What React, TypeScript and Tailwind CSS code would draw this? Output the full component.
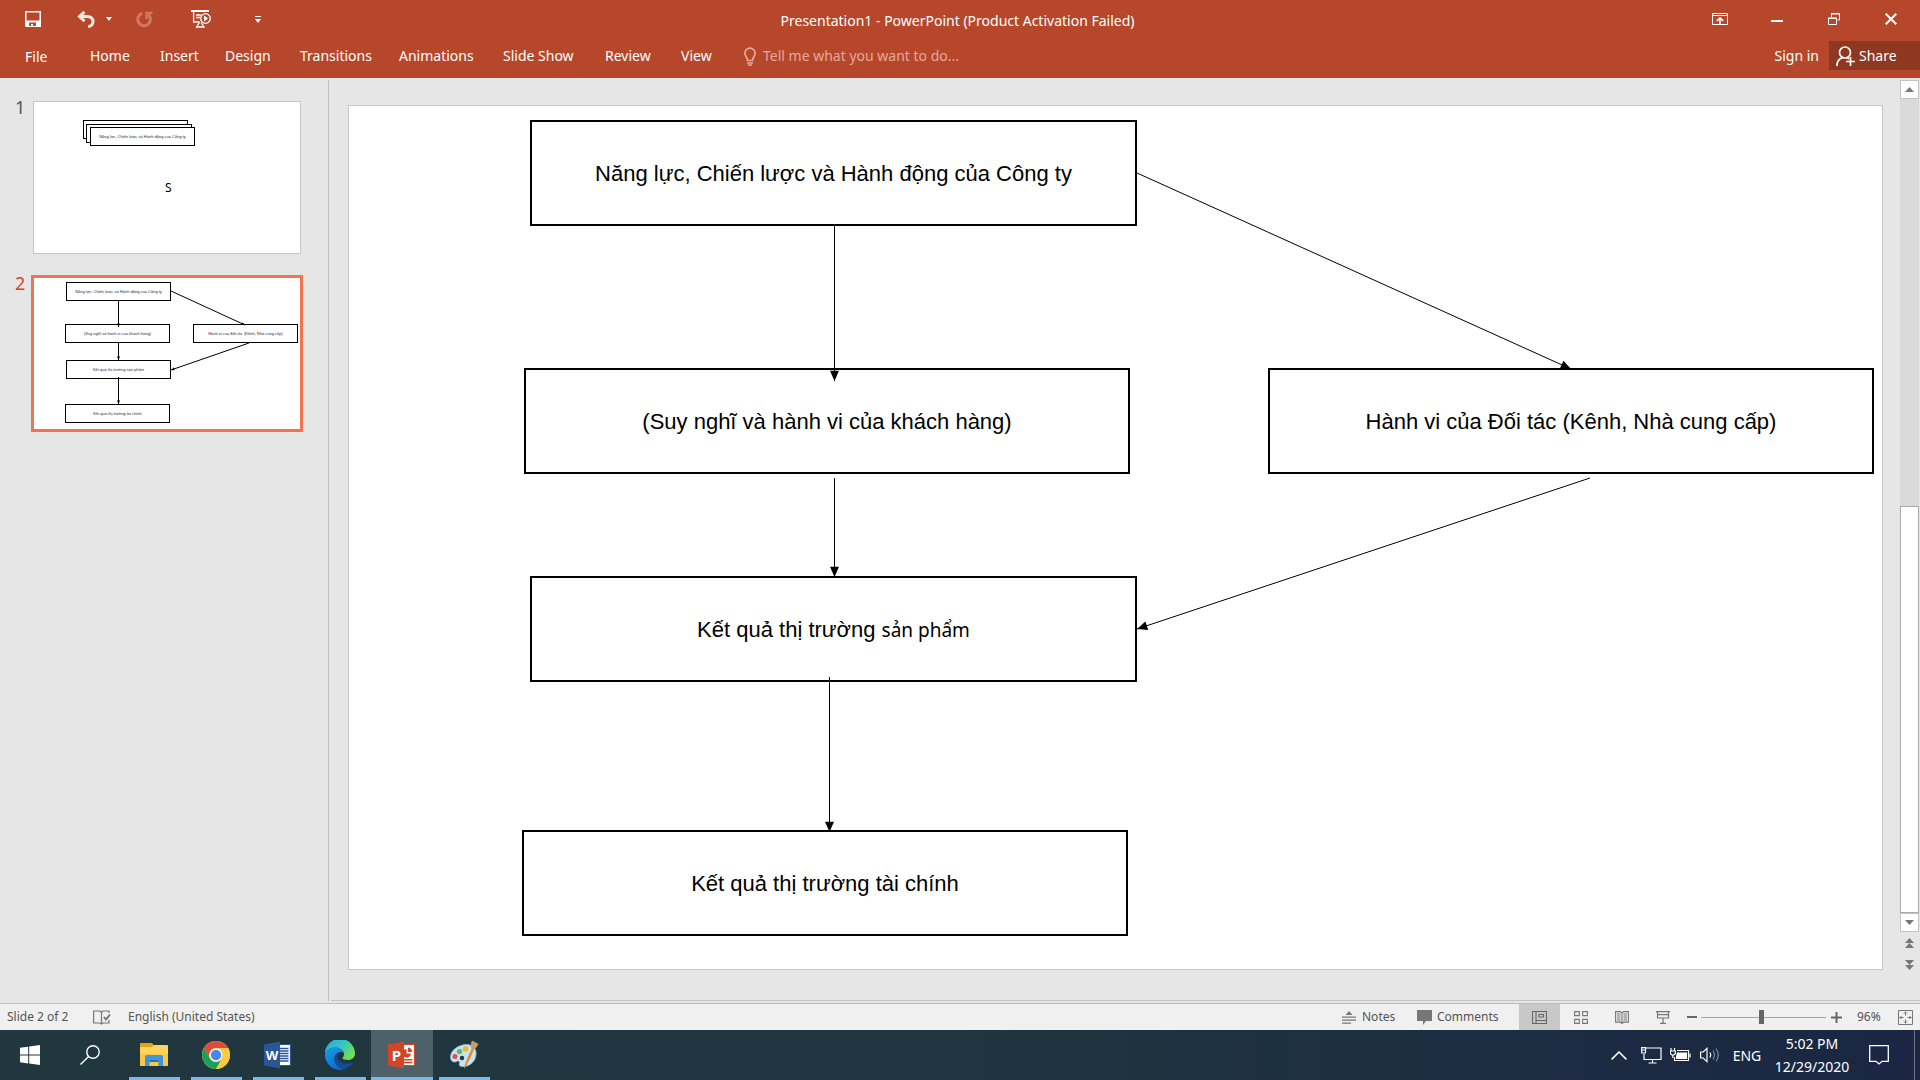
import React from "react";

type Box = { x: number; y: number; w: number; h: number; label?: React.ReactNode };
type Arrow = { from: [number, number]; to: [number, number] };
type Diagram = { width: number; height: number; boxes: Box[]; arrows: Arrow[] };

const T = {
  company: "Năng lực, Chiến lược và Hành động của Công ty",
  customer: "(Suy nghĩ và hành vi của khách hàng)",
  partner: "Hành vi của Đối tác (Kênh, Nhà cung cấp)",
  finance: "Kết quả thị trường tài chính",
};

const slide: Diagram = {
  width: 1533,
  height: 863,
  boxes: [
    { x: 181, y: 14, w: 607, h: 106, label: T.company },
    { x: 175, y: 262, w: 606, h: 106, label: T.customer },
    { x: 919, y: 262, w: 606, h: 106, label: T.partner },
    {
      x: 181, y: 470, w: 607, h: 106,
      label: (
        <>
          Kết quả thị trường <span className="font-['Noto_Sans'] text-[19px] leading-none">sản phẩm</span>
        </>
      ),
    },
    { x: 173, y: 724, w: 606, h: 106, label: T.finance },
  ],
  arrows: [
    { from: [485.5, 120], to: [485.5, 275] },
    { from: [485.5, 372], to: [485.5, 471] },
    { from: [480.5, 571], to: [480.5, 726] },
    { from: [788, 67], to: [1222, 263] },
    { from: [1241, 372], to: [788, 523] },
  ],
};

const thumbOne: Diagram = {
  width: 266,
  height: 151,
  boxes: [
    { x: 49, y: 18, w: 105, h: 19 },
    { x: 52, y: 22, w: 106, h: 19 },
    { x: 56, y: 25, w: 105, h: 19, label: T.company },
  ],
  arrows: [],
};

const thumbTwo: Diagram = {
  width: 266,
  height: 151,
  boxes: [
    { x: 32, y: 4, w: 105, h: 19, label: T.company },
    { x: 31, y: 46, w: 105, h: 19, label: T.customer },
    { x: 159, y: 46, w: 105, h: 19, label: T.partner },
    { x: 32, y: 82, w: 105, h: 19, label: "Kết quả thị trường sản phẩm" },
    { x: 31, y: 126, w: 105, h: 19, label: T.finance },
  ],
  arrows: [
    { from: [84.5, 22], to: [84.5, 49] },
    { from: [84.5, 65], to: [84.5, 82] },
    { from: [84.5, 99], to: [84.5, 126] },
    { from: [137, 13], to: [211, 47] },
    { from: [215, 65], to: [137, 92] },
  ],
};

const pct = (part: number, whole: number) => `${(part / whole) * 100}%`;

function Head({ from, to, size }: Arrow & { size: number }) {
  const a = Math.atan2(to[1] - from[1], to[0] - from[0]);
  const bx = to[0] - size * 1.15 * Math.cos(a);
  const by = to[1] - size * 1.15 * Math.sin(a);
  const dx = (size / 2) * Math.sin(a);
  const dy = (size / 2) * Math.cos(a);
  return <polygon points={`${to[0]},${to[1]} ${bx + dx},${by - dy} ${bx - dx},${by + dy}`} />;
}

function DiagramView({ data, small }: { data: Diagram; small?: boolean }) {
  return (
    <div className="relative h-full w-full overflow-hidden bg-white">
      {data.boxes.map((b, i) => (
        <div
          key={i}
          className={
            small
              ? "absolute flex items-center justify-center whitespace-nowrap border border-black bg-white font-['Liberation_Sans',sans-serif] text-[4px] text-gray-800"
              : "absolute flex items-center justify-center whitespace-nowrap border-2 border-black bg-white font-['Liberation_Sans',sans-serif] text-[22px] text-black"
          }
          style={{
            left: pct(b.x, data.width),
            top: pct(b.y, data.height),
            width: pct(b.w, data.width),
            height: pct(b.h, data.height),
          }}
        >
          {b.label && <p>{b.label}</p>}
        </div>
      ))}
      <svg
        className="absolute inset-0 h-full w-full"
        viewBox={`0 0 ${data.width} ${data.height}`}
        preserveAspectRatio="none"
        aria-hidden="true"
      >
        {data.arrows.map((a, i) => (
          <g key={i}>
            <line x1={a.from[0]} y1={a.from[1]} x2={a.to[0]} y2={a.to[1]} stroke="#000" strokeWidth="1" />
            <Head from={a.from} to={a.to} size={small ? 3 : 9} />
          </g>
        ))}
      </svg>
    </div>
  );
}

const tabs = [
  { name: "Home", cls: "w-[70px]" },
  { name: "Insert", cls: "w-[65px]" },
  { name: "Design", cls: "w-[75px]" },
  { name: "Transitions", cls: "w-[99px]" },
  { name: "Animations", cls: "w-[104px]" },
  { name: "Slide Show", cls: "w-[102px]" },
  { name: "Review", cls: "w-[76px]" },
  { name: "View", cls: "w-[62px]" },
];

const iconBtn = "flex h-9 items-center justify-center";

function TitleBar() {
  return (
    <div className="flex h-[38px] items-center text-white">
      <div className="flex flex-1 items-center pl-[13px]">
        <button aria-label="Save" className={iconBtn + " w-10"}>
          <svg width="16" height="16" viewBox="0 0 16 16" fill="#fff">
            <path fillRule="evenodd" d="M0 0h16v16H1l-1-1zM1.500 1.500v8h13v-8zM4 11.500V15h2v-2h2v2h3v-3.500z" />
          </svg>
        </button>
        <button aria-label="Undo" className={iconBtn + " ml-4 w-[34px]"}>
          <svg width="18" height="17" viewBox="0 0 18 17" fill="none" stroke="#f4e6e2" strokeWidth="3">
            <path d="M2 5.500h8c4 0 6 2 6 5s-2 5-5 5" />
            <path d="M7.500 .8 2.500 5.500l5 4.700" />
          </svg>
        </button>
        <button aria-label="Undo history" className={iconBtn + " w-3"}>
          <svg width="6" height="4" viewBox="0 0 6 4" fill="#fff"><path d="M0 0h6L3 4z" /></svg>
        </button>
        <button aria-label="Redo" className={iconBtn + " ml-[9px] w-10"}>
          <svg width="17" height="17" viewBox="0 0 17 17" fill="none" stroke="#cf7863" strokeWidth="3">
            <path d="M6 2.500A6.300 6.300 0 1 0 12 3.500" />
            <path d="M10.500 8V2h6" strokeWidth="2.500" />
          </svg>
        </button>
        <button aria-label="Start from beginning" className={iconBtn + " ml-[17px] w-10"}>
          <svg width="20" height="18" viewBox="0 0 20 18" fill="none" stroke="#fff" strokeWidth="1.300">
            <path d="M0 1h18" strokeWidth="2" />
            <path d="M2.600 1v11h6M5 5h5M5 7.500h4" />
            <circle cx="14.500" cy="8.500" r="4.800" />
            <path d="M13 5.500v6l4-3z" fill="#fff" stroke="none" />
            <path d="M8.500 12.500 5.500 17h7.500l-3-4.500" />
          </svg>
        </button>
        <button aria-label="Customize Quick Access Toolbar" className={iconBtn + " ml-[27px] w-[20px]"}>
          <svg width="6" height="7" viewBox="0 0 6 7" fill="#fff"><path d="M0 0h6v1H0zM0 3h6L3 7z" /></svg>
        </button>
      </div>
      <h1 className="pr-[18px] pt-1 text-[14px] leading-5">Presentation1 - PowerPoint (Product Activation Failed)</h1>
      <div className="flex flex-1 items-center justify-end">
        <button aria-label="Ribbon Display Options" className={iconBtn + " w-[57px]"}>
          <svg width="16" height="12" viewBox="0 0 16 12" fill="none" stroke="#fff">
            <path d="M.5.5h15v11H.5zM0 2.500h16" />
            <path d="M8 11V5M4.800 7.800 8 4.800l3.200 3" strokeWidth="1.600" />
          </svg>
        </button>
        <button aria-label="Minimize" className={iconBtn + " w-[57px] pt-1"}>
          <svg width="12" height="2" viewBox="0 0 12 2" fill="#fff"><path d="M0 0h12v2H0z" /></svg>
        </button>
        <button aria-label="Restore Down" className={iconBtn + " w-[57px]"}>
          <svg width="12" height="12" viewBox="0 0 12 12" fill="none" stroke="#fff">
            <path d="M.5 5.500h8v6h-8zM0 5h9M3.500 4V1h8v6h-2M3 .5h9" />
          </svg>
        </button>
        <button aria-label="Close" className={iconBtn + " w-[58px]"}>
          <svg width="12" height="12" viewBox="0 0 12 12" stroke="#fff" strokeWidth="2"><path d="M.7.7l10.600 10.600M11.300.7.7 11.300" /></svg>
        </button>
      </div>
    </div>
  );
}

function Ribbon() {
  return (
    <div className="flex h-10 items-start text-[14px] leading-9 text-white">
      <button className="w-[90px] pl-[25px] pt-px text-left">File</button>
      {tabs.map((t) => (
        <button key={t.name} className={t.cls + " shrink-0 whitespace-nowrap text-left"}>
          {t.name}
        </button>
      ))}
      <label htmlFor="tellme" className="flex h-9 items-center pl-px pr-[7px]" aria-label="Tell me">
        <svg width="12" height="19" viewBox="0 0 12 19" fill="none" stroke="#e3aa9b" strokeWidth="1.700">
          <path d="M3.500 13.500c0-3-2.600-4-2.600-7.300a5.100 5.100 0 0 1 10.200 0c0 3.300-2.600 4.300-2.600 7.300z" />
          <path d="M3 16h6M4 18h4" />
        </svg>
      </label>
      <input
        id="tellme"
        placeholder="Tell me what you want to do..."
        className="h-9 w-[240px] bg-transparent outline-none placeholder:text-[#e3aa9b]"
      />
      <div className="flex flex-1 justify-end">
        <button className="pr-[10px]">Sign in</button>
        <button className="mt-[3px] flex h-[29px] w-[91px] items-center gap-1 bg-[#8f3821] pl-[7px] leading-7">
          <svg width="19" height="20" viewBox="0 0 19 20" fill="none" stroke="#fff" strokeWidth="1.700">
            <circle cx="9" cy="6.500" r="5.500" />
            <path d="M.9 20c0-4 2-7 5.500-8.200M11 11.800l2 .9M14.500 11v9M10 15.500h9" />
          </svg>
          Share
        </button>
      </div>
    </div>
  );
}

function SlidePanel() {
  return (
    <nav aria-label="Slides" className="w-[329px] shrink-0 border-r border-[#bdbdbd]">
      <ol className="pt-[21px]">
        <li className="flex">
          <span className="w-[33px] pl-[15px] text-[18px] leading-[13px] text-[#555]">1</span>
          <button aria-label="Slide 1" className="relative h-[153px] w-[268px] border border-[#c6c6c6]">
            <DiagramView data={thumbOne} small />
            <span className="absolute left-[131px] top-[78px] text-[12px] leading-4 text-black">S</span>
          </button>
        </li>
        <li className="mt-[21px] flex">
          <span className="w-[31px] pl-[15px] text-[18px] leading-[17px] text-[#d24726]">2</span>
          <button aria-label="Slide 2" aria-current="true" className="h-[157px] w-[272px] border-3 border-[#f07352]">
            <DiagramView data={thumbTwo} small />
          </button>
        </li>
      </ol>
    </nav>
  );
}

function ScrollBar() {
  return (
    <div className="mr-px flex w-[19px] flex-col items-stretch">
      <button aria-label="Scroll up" className="flex h-[19px] items-center justify-center border border-[#c3c3c3] bg-white">
        <svg width="9" height="5" viewBox="0 0 9 5" fill="#777"><path d="M4.500 0 9 5H0z" /></svg>
      </button>
      <div className="flex flex-1 flex-col justify-end bg-[#dadada]">
        <div className="h-1/2 border border-[#ababab] bg-white" />
      </div>
      <button aria-label="Scroll down" className="flex h-[19px] items-center justify-center border border-[#c3c3c3] bg-white">
        <svg width="9" height="5" viewBox="0 0 9 5" fill="#777"><path d="M0 0h9L4.500 5z" /></svg>
      </button>
      <button aria-label="Previous slide" className="flex h-[22px] items-center justify-center">
        <svg width="9" height="10" viewBox="0 0 9 10" fill="#777"><path d="M4.500 0 9 5H0zM4.500 5 9 10H0z" /></svg>
      </button>
      <button aria-label="Next slide" className="flex h-[22px] items-center justify-center">
        <svg width="9" height="10" viewBox="0 0 9 10" fill="#777"><path d="M0 0h9L4.500 5zM0 5h9L4.500 10z" /></svg>
      </button>
      <div className="h-6" />
    </div>
  );
}

function StatusBar() {
  const view = "flex h-full w-[41px] items-center justify-center";
  return (
    <footer className="flex h-[27px] shrink-0 items-center border-t border-[#bdbdbd] bg-[#f0f0f0] text-[12px] text-[#555]">
      <span className="w-[93px] pl-[7px]">Slide 2 of 2</span>
      <button aria-label="Spelling">
        <svg width="18" height="15" viewBox="0 0 18 15" fill="none" stroke="#777" strokeWidth="1.200">
          <path d="M8.500 14V2.500L7 1H.6v12H7l1.500 1 1.500-1h6v-3M8.500 2.500 10 1h6v2" />
          <path d="m11 7 2 2.500L17 4.500" strokeWidth="2" />
        </svg>
      </button>
      <button className="ml-[17px]">English (United States)</button>
      <div className="flex h-full flex-1 items-center justify-end">
        <button className="flex w-[75px] items-center gap-[6px]">
          <svg width="14" height="13" viewBox="0 0 14 13" fill="#777">
            <path d="M7 0l3.500 4h-7zM0 5.500h14v1.200H0zM0 8.500h14v1.200H0zM0 11.500h9v1.200H0z" />
          </svg>
          Notes
        </button>
        <button className="flex w-[102px] items-center gap-[5px]">
          <svg width="15" height="15" viewBox="0 0 15 15" fill="#777"><path d="M0 0h15v11H9l-3 4v-4H0z" /></svg>
          Comments
        </button>
        <button aria-label="Normal view" aria-pressed="true" className={view + " bg-[#c8c8c8]"}>
          <svg width="15" height="13" viewBox="0 0 15 13" fill="none" stroke="#666" strokeWidth="1.100">
            <path d="M.5.5h14v12H.5zM4 .5v12M4 9.500h10.500M7 3.500h4.500V6H7z" />
          </svg>
        </button>
        <button aria-label="Slide sorter" className={view}>
          <svg width="14" height="13" viewBox="0 0 14 13" fill="none" stroke="#777" strokeWidth="1.100">
            <path d="M.6.6h4.800v4H.6zM8.600.6h4.800v4H8.600zM.6 8.400h4.800v4H.6zM8.600 8.400h4.800v4H8.600z" />
          </svg>
        </button>
        <button aria-label="Reading view" className={view}>
          <svg width="14" height="13" viewBox="0 0 14 13" fill="none" stroke="#777" strokeWidth="1.100">
            <path d="M7 12.500V2L5.500.6H.6v10.500h4.900L7 12.500l1.500-1.400h4.900V.6H8.500L7 2M2 3h3.500M2 5h3.500M2 7h3.500M2 9h3.500M8.500 3H12M8.500 5H12M8.500 7H12M8.500 9H12" />
          </svg>
        </button>
        <button aria-label="Slide show" className={view}>
          <svg width="14" height="13" viewBox="0 0 14 13" fill="none" stroke="#777" strokeWidth="1.200">
            <path d="M0 .7h14M1.500.7v3H12.500v-3M1.500 3.500v3.500h11V3.500M7 7v5M4 12.300h6" />
          </svg>
        </button>
        <button aria-label="Zoom out" className="flex w-[18px] justify-center">
          <svg width="10" height="2" fill="#666"><path d="M0 0h10v2H0z" /></svg>
        </button>
        <input
          type="range"
          aria-label="Zoom"
          min={0}
          max={120}
          defaultValue={58}
          className="h-[14px] w-[125px] appearance-none bg-[linear-gradient(#a6a6a6,#a6a6a6)] bg-[length:100%_1px] bg-center bg-no-repeat [&::-webkit-slider-thumb]:h-[14px] [&::-webkit-slider-thumb]:w-[5px] [&::-webkit-slider-thumb]:appearance-none [&::-webkit-slider-thumb]:bg-[#666]"
        />
        <button aria-label="Zoom in" className="flex w-5 justify-center">
          <svg width="11" height="11" fill="#666"><path d="M4.500 0h2v4.500H11v2H6.500V11h-2V6.500H0v-2h4.500z" /></svg>
        </button>
        <button className="w-[52px] pl-[11px] text-left">96%</button>
        <button aria-label="Fit slide to window" className="mr-[7px]">
          <svg width="15" height="15" viewBox="0 0 15 15" fill="none" stroke="#777">
            <path d="M.5.5h14v14H.5z" />
            <path d="M7.500 1.500v4M6 3.500l1.500-1.500L9 3.500M7.500 9.500v4M6 11.500l1.500 1.500L9 11.500M1.500 7.500h4M3.500 6 2 7.500 3.500 9M9.500 7.500h4M11.500 6 13 7.500 11.500 9" />
          </svg>
        </button>
      </div>
    </footer>
  );
}

const WindowsLogo = () => (
  <svg width="20" height="20" viewBox="0 0 20 20" fill="#fff">
    <path d="M0 2.800 8.200 1.700v7.900H0zM9.200 1.500 20 0v9.600H9.200zM0 10.500h8.200v7.900L0 17.300zM9.200 10.500H20V20L9.200 18.500z" />
  </svg>
);

const FolderLogo = () => (
  <svg width="28" height="24" viewBox="0 0 28 24">
    <path d="M0 1q0-1 1-1h11l2 2.500H14V6H0z" fill="#e2a313" />
    <path d="M0 4h11.500L14 2h13q1 0 1 1v19q0 1-1 1H1q-1 0-1-1z" fill="#ffd45e" />
    <path d="M0 11h28v11q0 1-1 1H1q-1 0-1-1z" fill="#fbc845" />
    <path d="M5 23V14q0-2 2-2h14q2 0 2 2v9h-4.500v-6h-9v6z" fill="#3c96dd" />
    <path d="M9.500 17h9v2h-9z" fill="#2a72b5" />
  </svg>
);

const ChromeLogo = () => (
  <svg width="28" height="28" viewBox="0 0 28 28">
    <circle cx="14" cy="14" r="14" fill="#fbcb3d" />
    <path d="M1.900 7A14 14 0 0 1 26.100 7H14a7 7 0 0 0-6.100 10.500z" fill="#dd4b3e" />
    <path d="M1.900 7A14 14 0 0 0 14 28l6.060-10.500A7 7 0 0 1 7.900 17.500z" fill="#1a9f5c" />
    <path d="M14 7h12.100A14 14 0 0 1 14 28l6.060-10.500A7 7 0 0 0 14 7z" fill="#fbcb3d" />
    <circle cx="14" cy="14" r="6.500" fill="#fff" />
    <circle cx="14" cy="14" r="5.200" fill="#4688f1" />
  </svg>
);

const WordLogo = () => (
  <svg width="28" height="28" viewBox="0 0 28 28">
    <path d="M14 3.500h12.500v21H14z" fill="#fff" stroke="#2a5699" strokeWidth="1.200" />
    <path d="M16 7.500h8.500M16 10h8.500M16 12.500h8.500M16 15h8.500M16 17.500h8.500M16 20h8.500" stroke="#2a5699" strokeWidth="1.300" />
    <path d="M0 3.500 16 .5v27L0 24.500z" fill="#2a5699" />
    <text x="8" y="19" textAnchor="middle" fontFamily="Noto Sans" fontWeight="700" fontSize="13" fill="#fff">W</text>
  </svg>
);

const PowerPointLogo = () => (
  <svg width="28" height="28" viewBox="0 0 28 28">
    <path d="M14 3.500h12.500v21H14z" fill="#fff" stroke="#d24625" strokeWidth="1.200" />
    <path d="M18.500 8v4.500H23a4.500 4.500 0 0 1-7 3.500V8.700a4.500 4.500 0 0 1 2.500-.7z" fill="#d24625" />
    <path d="M19.800 6.500a4.500 4.500 0 0 1 4.300 4.500h-4.300z" fill="#d24625" />
    <path d="M16 18.700h8.500M16 21.500h8.500" stroke="#d24625" strokeWidth="1.400" />
    <path d="M0 3.500 16 .5v27L0 24.500z" fill="#d24625" />
    <text x="8.500" y="19.500" textAnchor="middle" fontFamily="Noto Sans" fontWeight="700" fontSize="15" fill="#fff">P</text>
  </svg>
);

const EdgeLogo = () => (
  <svg width="30" height="30" viewBox="0 0 30 30">
    <defs>
      <linearGradient id="edgeTop" x1="0" y1="0" x2="1" y2=".6">
        <stop offset="0" stopColor="#35a6e8" />
        <stop offset=".5" stopColor="#2ec3c9" />
        <stop offset="1" stopColor="#6fe052" />
      </linearGradient>
      <linearGradient id="edgeLeft" x1="0" y1="0" x2=".4" y2="1">
        <stop offset="0" stopColor="#1b9de2" />
        <stop offset="1" stopColor="#0b6fd0" />
      </linearGradient>
    </defs>
    <path d="M0 14A15 15 0 0 1 30 13.500c0 4-3 6.500-7 6.500-3.500 0-5.500-1-5.500-2 0-.8 1.500-1.300 1.500-4C19 10.500 15 7.500 10.500 7.500 5 7.500 1 10.500 0 14z" fill="url(#edgeTop)" />
    <path d="M0 14C1 10 5 7.500 10.500 7.500c4.500 0 8 2.500 8.400 5.500C17.500 11.500 11 11 9.500 17.500 8.500 23 13 28 18.500 29.500A15 15 0 0 1 0 14z" fill="url(#edgeLeft)" />
    <path d="M13.500 12.200C9.500 14 8.500 18.500 10 22c1.800 4.500 5.500 7 9 7.400 4-1 7-3.600 8.600-6.400.3-.6-.2-1-.8-.7C21 25.500 13 23 12.300 17c-.2-2 .3-3.700 1.200-4.800z" fill="#124d98" />
  </svg>
);

const PaintLogo = () => (
  <svg width="30" height="30" viewBox="0 0 30 30">
    <path d="M14 5C22 3 28 8 27 15c-1 8-8 12-14 11.500-3-.3-3-2-2.500-3.500.5-2-1-2.500-3-1.500-3 1.500-6-.5-6-4C1.500 11 7 6.500 14 5z" fill="#c4e4f2" stroke="#8fbfd6" strokeWidth=".8" />
    <circle cx="13" cy="18" r="2.200" fill="#21373f" />
    <circle cx="6" cy="16.500" r="2.500" fill="#e2504b" />
    <circle cx="10.500" cy="11.500" r="2.600" fill="#62b84b" />
    <circle cx="16.500" cy="9" r="2.800" fill="#f7b62a" />
    <path d="M15 29c0-3 4-13 8-21l2 1.200C22 17 18 25 15 29z" fill="#e98a2d" />
    <path d="M22.500 8.500C21 5 22.500 2 23 .5l6.500 3.500c-1 1.500-2 4.500-5 5.500z" fill="#c99b66" />
  </svg>
);

const apps = [
  { name: "File Explorer", Logo: FolderLogo },
  { name: "Google Chrome", Logo: ChromeLogo },
  { name: "Word", Logo: WordLogo },
  { name: "Microsoft Edge", Logo: EdgeLogo },
  { name: "PowerPoint", Logo: PowerPointLogo, active: true },
  { name: "Paint", Logo: PaintLogo },
];

function Taskbar() {
  return (
    <div className="flex h-[50px] shrink-0 items-stretch bg-linear-to-r from-[#21373f] via-[#20353f] to-[#1a2643] text-[14px] text-white">
      <button aria-label="Start" className="flex w-[60px] items-center justify-center"><WindowsLogo /></button>
      <button aria-label="Search" className="flex w-[60px] items-center justify-center">
        <svg width="20" height="20" viewBox="0 0 20 20" fill="none" stroke="#fff" strokeWidth="1.400">
          <circle cx="13" cy="7" r="6.200" />
          <path d="M8.600 11.400.5 19.500" />
        </svg>
      </button>
      <div className="ml-[3px] flex">
        {apps.map(({ name, Logo, active }) => (
          <button key={name} aria-label={name} className={active ? "flex w-[62px] flex-col items-center bg-[#4e6169]" : "flex w-[62px] flex-col items-center"}>
            <span className="flex flex-1 items-center pt-[3px]"><Logo /></span>
            <span className={active ? "h-[3px] w-full bg-[#76b9ed]" : "h-[3px] w-[51px] bg-[#76b9ed]"} />
          </button>
        ))}
      </div>
      <div className="flex flex-1 items-center justify-end">
        <button aria-label="Show hidden icons" className="flex w-7 justify-center">
          <svg width="16" height="9" viewBox="0 0 16 9" fill="none" stroke="#fff" strokeWidth="1.500"><path d="M.6 8.400 8 1l7.400 7.400" /></svg>
        </button>
        <button aria-label="Network" className="flex w-8 justify-center pl-1">
          <svg width="21" height="17" viewBox="0 0 21 17" fill="none" stroke="#fff" strokeWidth="1.200">
            <path d="M5 1h15v11.500H3V7M11.500 12.500V16M7.500 16h8M.7.7h3.800V6H.7zM1 3h3" />
          </svg>
        </button>
        <button aria-label="Battery" className="flex w-[30px] justify-center">
          <svg width="21" height="14" viewBox="0 0 21 14" fill="none" stroke="#fff" strokeWidth="1.200">
            <path d="M7 2.500h11.500v10h-14V9M20 5.500v4M1 0v2.500M4.500 0v2.500M.4 3h5v2.500L3.800 7h-2L.4 5.500zM2.800 7v3" />
            <path d="M7 4.500h10v6.500H6V8z" fill="#fff" stroke="none" />
          </svg>
        </button>
        <button aria-label="Volume" className="flex w-[30px] justify-center">
          <svg width="21" height="18" viewBox="0 0 21 18" fill="none" stroke="#fff" strokeWidth="1.200">
            <path d="M.6 6h2.600L7 2.300v13.400L3.200 12H.6zM10 6.500q1.500 2.500 0 5" />
            <path d="M13 4.500q3 4.500 0 9M16 2.500q4.500 6.500 0 13" stroke="#7f879a" />
          </svg>
        </button>
        <button className="w-11 text-center">ENG</button>
        <button className="w-[86px] text-center leading-[23px]">
          <span className="block">5:02 PM</span>
          <span className="block">12/29/2020</span>
        </button>
        <button aria-label="Notifications" className="flex w-[59px] justify-center pr-3">
          <svg width="20" height="20" viewBox="0 0 20 20" fill="none" stroke="#fff" strokeWidth="1.300">
            <path d="M.7.7h18.600v15.600H13L10 19l-3-2.700H.7z" />
          </svg>
        </button>
        <button aria-label="Show desktop" className="h-full w-[6px] border-l border-[#6d7589]" />
      </div>
    </div>
  );
}

export default function App() {
  return (
    <div className="flex h-screen flex-col overflow-hidden bg-[#e6e6e6] font-['Noto_Sans',sans-serif]">
      <header className="h-[78px] shrink-0 bg-[#b7472a]">
        <TitleBar />
        <Ribbon />
      </header>
      <main className="flex min-h-0 flex-1 py-[2px]">
        <SlidePanel />
        <div className="ml-[2px] flex flex-1 border-b border-[#c3c3c3]">
          <section aria-label="Slide" className="flex-1 px-[17px] pb-[30px] pt-[25px]">
            <div className="h-full border border-[#c6c6c6]">
              <DiagramView data={slide} />
            </div>
          </section>
          <ScrollBar />
        </div>
      </main>
      <StatusBar />
      <Taskbar />
    </div>
  );
}
